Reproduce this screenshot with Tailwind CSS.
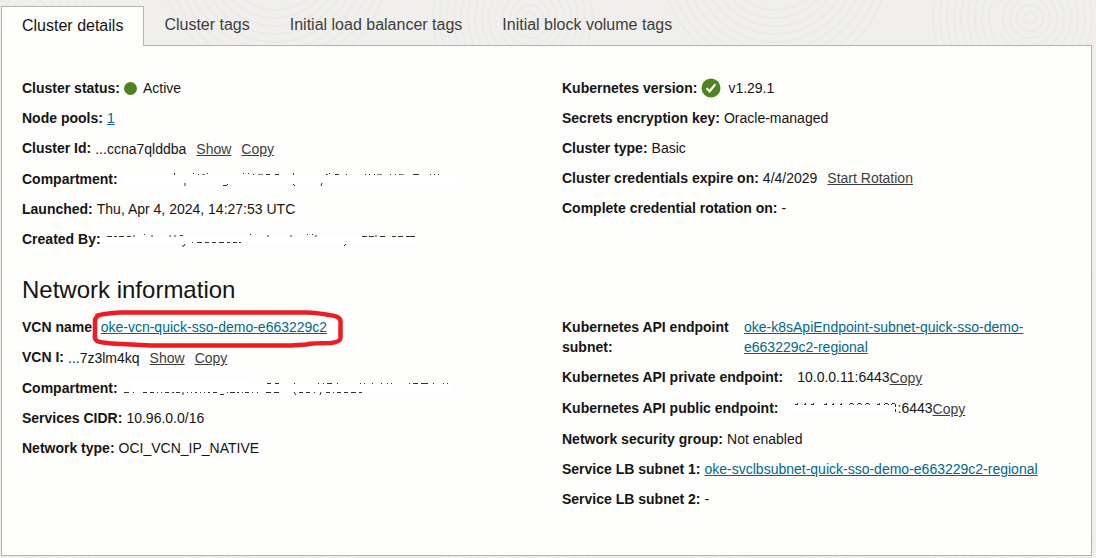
<!DOCTYPE html>
<html lang="en">
<head>
<meta charset="utf-8">
<meta name="viewport" content="width=device-width, initial-scale=1">
<title>Cluster details</title>
<script src="https://cdn.jsdelivr.net/npm/@tailwindcss/browser@4"></script>
</head>
<body class="relative min-h-screen bg-[#f0efed] font-['Liberation_Sans',Arial,sans-serif] text-sm leading-5 text-[#161513]">
<!-- Faint ripple texture behind the page -->
<svg class="absolute inset-0 h-full w-full" aria-hidden="true">
  <defs>
    <pattern id="ripples" width="500" height="260" patternUnits="userSpaceOnUse">
      <g fill="none" stroke="#ebeae8" stroke-width="2">
        <circle cx="275" cy="-40" r="50"/><circle cx="275" cy="-40" r="58"/><circle cx="275" cy="-40" r="66"/><circle cx="275" cy="-40" r="74"/><circle cx="275" cy="-40" r="82"/><circle cx="275" cy="-40" r="90"/><circle cx="275" cy="-40" r="98"/><circle cx="275" cy="-40" r="106"/><circle cx="275" cy="-40" r="114"/>
        <circle cx="30" cy="18" r="6"/><circle cx="30" cy="18" r="13"/><circle cx="30" cy="18" r="20"/><circle cx="30" cy="18" r="27"/><circle cx="30" cy="18" r="34"/><circle cx="30" cy="18" r="41"/><circle cx="30" cy="18" r="48"/><circle cx="30" cy="18" r="55"/><circle cx="30" cy="18" r="62"/>
        <circle cx="530" cy="18" r="41"/><circle cx="530" cy="18" r="48"/><circle cx="530" cy="18" r="55"/><circle cx="530" cy="18" r="62"/><circle cx="530" cy="18" r="69"/><circle cx="530" cy="18" r="76"/><circle cx="530" cy="18" r="83"/><circle cx="530" cy="18" r="90"/><circle cx="530" cy="18" r="97"/>
      </g>
    </pattern>
  </defs>
  <rect width="100%" height="100%" fill="url(#ripples)"/>
</svg>

<main class="relative pt-1.5 pr-1 pl-px">
  <div role="tablist" class="flex text-base leading-6 text-[#3f3d3b]">
    <button role="tab" aria-selected="true" class="relative z-10 -mb-px h-10 border border-b-0 border-[#b8b3ac] bg-[#fdfdfb] px-5 pb-0.5 text-[#161513]">Cluster details</button>
    <button role="tab" aria-selected="false" class="h-[38px] px-5">Cluster tags</button>
    <button role="tab" aria-selected="false" class="h-[38px] px-5">Initial load balancer tags</button>
    <button role="tab" aria-selected="false" class="h-[38px] px-5">Initial block volume tags</button>
  </div>

  <section role="tabpanel" class="border border-[#b5b1ae] bg-[#fdfdfb] px-5 pt-8 pb-[46px]">
    <div class="grid grid-cols-2 gap-[31px]">
      <dl class="flex flex-col gap-2.5">
        <div class="flex items-center gap-1"><dt class="font-bold">Cluster status:</dt><dd class="flex items-center gap-1.5"><span class="size-[13px] rounded-full bg-[#4f8321]"></span>Active</dd></div>
        <div class="flex gap-1"><dt class="font-bold">Node pools:</dt><dd><a href="#" class="text-[#00688c] underline underline-offset-1">1</a></dd></div>
        <div class="flex gap-1"><dt class="font-bold">Cluster Id:</dt><dd class="flex gap-2.5 pt-px"><span>...ccna7qlddba</span><button class="text-[#3f3d3b] underline underline-offset-1">Show</button><button class="text-[#3f3d3b] underline underline-offset-1">Copy</button></dd></div>
        <div class="flex gap-1"><dt class="font-bold">Compartment:</dt><dd>
          <!-- Erased value: only specks remain along the edges of the white stroke -->
          <svg class="h-5 w-[338px]" viewBox="0 0 338 20" aria-label="Redacted" role="img">
            <rect x="0" y="6" width="336" height="8" rx="4" fill="#fff"/>
            <g stroke="#33302e" stroke-width="1" fill="none">
              <path d="M52 4.500h1M52 5.500h1M71 4.500h1M76 5.500h1M85 4.500h1M121 4.500h1M126 4.500h1M131 5.500h1M144 5.500h4M153 5.500h4M171 4.500h1M171 5.500h1M204 5.500h1M207 4.500h1M213 5.500h4M224 5.500h1M243 5.500h1M247 5.500h1M252 5.500h1M268 5.500h1M273 5.500h1M291 5.500h6M308 5.500h1M312 5.500h1M316 5.500h1"/>
              <path d="M63 14v3M101 16.500h4M105 15.500h1M171 15l2 2M200 14l-1 3"/>
              <path d="M80 5.500h3M136 5.500h5M204 5.500h2M255 5.500h5M277 5.500h5" opacity=".6"/>
            </g>
          </svg></dd></div>
        <div class="flex gap-1"><dt class="font-bold">Launched:</dt><dd>Thu, Apr 4, 2024, 14:27:53 UTC</dd></div>
        <div class="flex gap-1"><dt class="font-bold">Created By:</dt><dd>
          <svg class="h-5 w-[320px]" viewBox="0 0 320 20" aria-label="Redacted" role="img">
            <rect x="0" y="8" width="312" height="8" rx="4" fill="#fff"/>
            <g stroke="#33302e" stroke-width="1" fill="none">
              <path d="M2 7.500h5M9 7.500h3M14 7.500h5M22 7.500h4M29 6v2M39 5.500h1M47 6v2M65 6v2M70 6v2M75 6.500h3M145 5.500h1M163 6v2M186 6v2M202 5.500h1M207 5.500h1M211 6v2M257 7.500h5M264 7.500h5M271 6v2M275 7.500h5M287 7.500h4M293 7.500h5M301 7.500h9"/>
              <path d="M80 15l-1 2h-2M87 13.500h1M92 13.500h5M100 13.500h4M107 13.500h4M114 13.500h5M122 13.500h3M128 13.500h4M134 13.500h2M241 15l-2 2"/>
            </g>
          </svg></dd></div>
      </dl>
      <dl class="flex flex-col gap-2.5">
        <div class="flex items-center gap-1"><dt class="font-bold">Kubernetes version:</dt><dd class="flex items-center gap-[7px]">
          <svg class="size-5" viewBox="0 0 20 20" aria-hidden="true"><circle cx="10" cy="10" r="9.500" fill="#4f8321"/><path d="M5.500 10.200l3.200 3.100 5.600-7" fill="none" stroke="#fff" stroke-width="2.200"/></svg>v1.29.1</dd></div>
        <div class="flex gap-1"><dt class="font-bold">Secrets encryption key:</dt><dd>Oracle-managed</dd></div>
        <div class="flex gap-1"><dt class="font-bold">Cluster type:</dt><dd>Basic</dd></div>
        <div class="flex gap-1"><dt class="font-bold">Cluster credentials expire on:</dt><dd class="flex gap-2.5">4/4/2029<button class="text-[#3f3d3b] underline underline-offset-1">Start Rotation</button></dd></div>
        <div class="flex gap-1"><dt class="font-bold">Complete credential rotation on:</dt><dd>-</dd></div>
      </dl>
    </div>

    <h2 class="mt-[25px] mb-[11px] text-2xl">Network information</h2>

    <div class="grid grid-cols-2 gap-[31px]">
      <dl class="flex flex-col gap-2.5">
        <div class="flex gap-1"><dt class="font-bold">VCN name:</dt><dd class="relative"><a href="#" class="text-[#00688c] underline underline-offset-1">oke-vcn-quick-sso-demo-e663229c2</a>
          <!-- Hand-drawn highlight around the link -->
          <svg class="pointer-events-none absolute -top-2 -left-2.5 h-10 w-[254px] max-w-none" viewBox="0 0 254 40" aria-hidden="true"><path d="M5 7Q9 5 28 3.500H214Q229 4 238 6Q249 7 249.500 12V29Q249 33 240 34Q222 34 215 35.500L200 36.500H60L30 35Q10 34 6 32Q3 30 4 24V12Q4 8 8 6.500" fill="none" stroke="#ed1c24" stroke-width="4.500" stroke-linejoin="round"/></svg></dd></div>
        <div class="flex gap-1"><dt class="font-bold">VCN I:</dt><dd class="flex gap-2.5 pt-px"><span>...7z3lm4kq</span><button class="text-[#3f3d3b] underline underline-offset-1">Show</button><button class="text-[#3f3d3b] underline underline-offset-1">Copy</button></dd></div>
        <div class="flex gap-1"><dt class="font-bold">Compartment:</dt><dd>
          <svg class="h-5 w-[338px]" viewBox="0 0 338 20" aria-label="Redacted" role="img">
            <path d="M8 3H130V13H8zM130 6H332V14H130z" fill="#fff"/>
            <g stroke="#33302e" stroke-width="1" fill="none">
              <path d="M2 14.500h5M11 14.500h1M21 14.500h4M28 14.500h4M35 14.500h1M39 14.500h1M43 14.500h4M50 14.500h2M54 14.500h4M61 14v3M65 14.500h1M69 14.500h1M73 14.500h2M78 14.500h1M82 14.500h1M86 14.500h2M91 14.500h4M98 16.500h4M105 14.500h1M108 14.500h5M115 14.500h2M120 14.500h1M123 14.500h4M130 14.500h1M135 14.500h1M144 14.500h5M152 14.500h5M172 14.500h1M177 14.500h4M184 14.500h4M192 14.500h1M204 14.500h4M211 14.500h1M215 14.500h4M222 14.500h4M229 14.500h5M237 14.500h3"/>
              <path d="M172 14l2 3M199 14l-1 3M145 5.500h4M153 5.500h4M172 5.500h1M196 5.500h1M201 5.500h1M205 5.500h5M215 5.500h1M238 5.500h1M242 5.500h1M250 5.500h1M259 5.500h1M265 5.500h1M269 5.500h1M287 5.500h1M291 5.500h5M299 5.500h7M311 5.500h1M321 5.500h1M325 5.500h1"/>
            </g>
          </svg></dd></div>
        <div class="flex gap-1"><dt class="font-bold">Services CIDR:</dt><dd>10.96.0.0/16</dd></div>
        <div class="flex gap-1"><dt class="font-bold">Network type:</dt><dd>OCI_VCN_IP_NATIVE</dd></div>
      </dl>
      <dl class="flex flex-col gap-2.5">
        <div class="flex gap-2.5"><dt class="w-[172px] shrink-0 font-bold">Kubernetes API endpoint subnet:</dt><dd class="max-w-[300px]"><a href="#" class="text-[#00688c] underline underline-offset-1">oke-k8sApiEndpoint-subnet-quick-sso-demo-e663229c2-regional</a></dd></div>
        <div class="flex gap-3.5"><dt class="font-bold">Kubernetes API private endpoint:</dt><dd class="flex">10.0.0.11:6443<button class="pt-px text-[#3f3d3b] underline underline-offset-1">Copy</button></dd></div>
        <div class="flex gap-3.5"><dt class="font-bold">Kubernetes API public endpoint:</dt><dd class="flex items-start">
          <svg class="h-5 w-[105px]" viewBox="0 0 105 20" aria-label="Redacted" role="img">
            <rect x="0" y="7" width="103" height="8" fill="#fff"/>
            <path d="M2 6.500h3M4 5.500h1M11 6.500h2M12 5.500h1M18 6.500h3M20 5.500h1M31 6.500h3M33 5.500h1M39 6.500h2M40 5.500h1M47 6.500h2M48 5.500h1M56 6.500h1M60 6.500h1M57 5.500h3M64 6.500h1M68 6.500h1M65 5.500h3M72 6.500h1M76 6.500h1M73 5.500h3M84 6.500h3M86 5.500h1M91 6.500h1M95 6.500h1M92 5.500h3M98 6.500h1M99 5.500h3M102.500 6v3M102.500 11v3" stroke="#33302e" fill="none"/>
          </svg>:6443<button class="pt-px text-[#3f3d3b] underline underline-offset-1">Copy</button></dd></div>
        <div class="flex gap-1"><dt class="font-bold">Network security group:</dt><dd>Not enabled</dd></div>
        <div class="flex gap-1"><dt class="font-bold">Service LB subnet 1:</dt><dd><a href="#" class="text-[#00688c] underline underline-offset-1">oke-svclbsubnet-quick-sso-demo-e663229c2-regional</a></dd></div>
        <div class="flex gap-1"><dt class="font-bold">Service LB subnet 2:</dt><dd>-</dd></div>
      </dl>
    </div>
  </section>
</main>
</body>
</html>
